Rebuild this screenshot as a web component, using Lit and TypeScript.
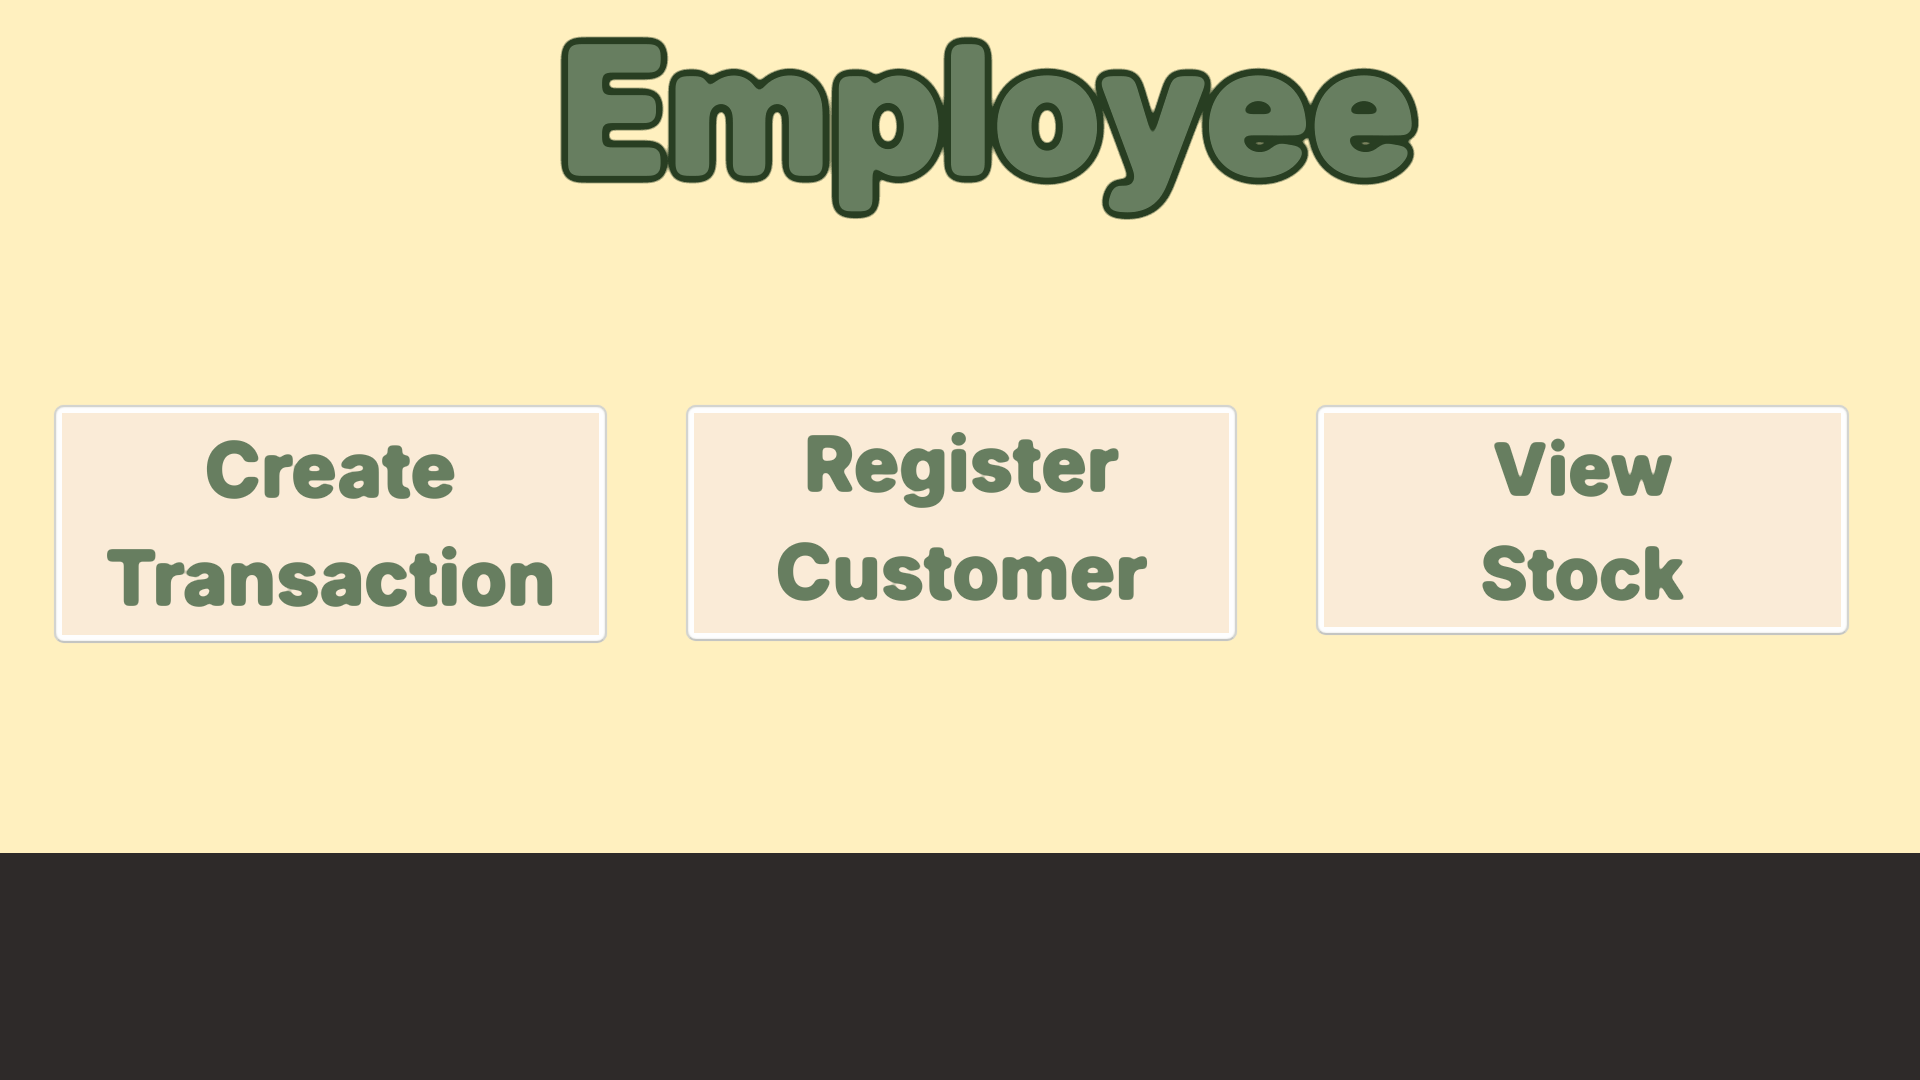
import { LitElement, html, css } from "lit";
import { customElement, property } from "lit/decorators.js";

@customElement("menu-card")
export class MenuCard extends LitElement {
  @property() first = "";
  @property() second = "";
  @property({ reflect: true }) variant = "";

  static styles = css`
    :host {
      display: block;
    }
    .defs {
      position: absolute;
      width: 0;
      height: 0;
    }
    .card {
      display: block;
      width: 100%;
      box-sizing: border-box;
      margin: 0;
      padding: 6px;
      border: 2px solid #d3d4d0;
      border-bottom-color: #c4c5c2;
      border-radius: 10px;
      background: #fefefe;
      box-shadow: 0 0 1px #d3d4d0, inset 0 0 2px #d3d4d0;
      color: #677e60;
      font-family: Inter, "Liberation Sans", sans-serif;
      font-size: 76px;
      font-weight: 800;
      line-height: 100px;
      text-align: center;
      cursor: pointer;
    }
    .face {
      display: block;
      padding: 6px 0 8px;
      background: #faebd7;
    }
    .label {
      display: grid;
      gap: 8px;
      filter: url(#soften);
    }
    :host([variant="raised"]) .face {
      padding: 0 0 12px;
    }
    :host([variant="compact"]) .card {
      font-size: 72px;
    }
    :host([variant="compact"]) .face {
      padding: 6px 0 4px;
    }
    :host([variant="compact"]) .label {
      gap: 4px;
    }
  `;

  render() {
    return html`
      <svg class="defs" aria-hidden="true">
        <filter id="soften" x="0" y="0" width="100%" height="100%" color-interpolation-filters="sRGB">
          <feGaussianBlur in="SourceAlpha" stdDeviation="2" />
          <feComponentTransfer result="shape">
            <feFuncA type="linear" slope="6" intercept="-1.6" />
          </feComponentTransfer>
          <feFlood flood-color="#677e60" />
          <feComposite in2="shape" operator="in" />
        </filter>
      </svg>
      <button class="card" type="button">
        <span class="face">
          <span class="label">
            <span>${this.first}</span>
            <span>${this.second}</span>
          </span>
        </span>
      </button>
    `;
  }
}

@customElement("app-root")
export class AppRoot extends LitElement {
  static styles = css`
    :host {
      display: block;
      min-height: 100vh;
      background: #2e2a29;
    }
    .defs {
      position: absolute;
      width: 0;
      height: 0;
    }
    .page {
      box-sizing: border-box;
      min-height: 79vh;
      background: #fff0bf;
    }
    .title {
      margin: 0;
      padding-left: 56px;
      color: #677e60;
      font-family: Inter, "Liberation Sans", sans-serif;
      font-size: 176px;
      font-weight: 800;
      line-height: 220px;
      text-align: center;
      filter: url(#outline);
    }
    .menu {
      display: grid;
      grid-template-columns: 553fr 551fr 533fr;
      align-items: start;
      gap: 79px;
      padding: 185px 71px 0 54px;
    }
  `;

  render() {
    return html`
      <main class="page">
        <svg class="defs" aria-hidden="true">
          <filter id="outline" x="0" y="0" width="100%" height="110%" color-interpolation-filters="sRGB">
            <feGaussianBlur in="SourceAlpha" stdDeviation="5" />
            <feComponentTransfer result="shape">
              <feFuncA type="linear" slope="14" intercept="-4.4" />
            </feComponentTransfer>
            <feGaussianBlur in="shape" stdDeviation="4" />
            <feComponentTransfer result="grown">
              <feFuncA type="linear" slope="22" intercept="-0.5" />
            </feComponentTransfer>
            <feFlood flood-color="#283e22" />
            <feComposite in2="grown" operator="in" result="rim" />
            <feFlood flood-color="#677e60" />
            <feComposite in2="shape" operator="in" result="fill" />
            <feMerge>
              <feMergeNode in="rim" />
              <feMergeNode in="fill" />
            </feMerge>
          </filter>
        </svg>
        <h1 class="title">Employee</h1>
        <nav class="menu">
          <menu-card first="Create" second="Transaction"></menu-card>
          <menu-card first="Register" second="Customer" variant="raised"></menu-card>
          <menu-card first="View" second="Stock" variant="compact"></menu-card>
        </nav>
      </main>
    `;
  }
}
